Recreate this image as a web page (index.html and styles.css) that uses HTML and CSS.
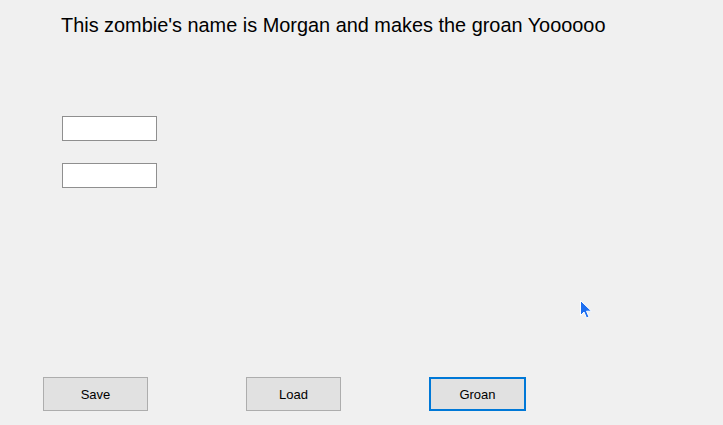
FILE: index.html
```html
<!DOCTYPE html>
<html>
<head>
<meta charset="utf-8">
<link rel="stylesheet" href="styles.css">
</head>
<body>
<div class="form">
  <div class="message">This zombie's name is Morgan and makes the groan Yoooooo</div>
  <div class="fields">
    <input class="textbox" type="text">
    <input class="textbox" type="text">
  </div>
  <div class="buttons">
    <button class="btn btn-save">Save</button>
    <button class="btn btn-load">Load</button>
    <button class="btn btn-groan">Groan</button>
  </div>
  <svg class="cursor" width="14" height="20" viewBox="0 0 14 20">
    <path d="M0.5 0.5 L0.5 15.5 L4 12 L6.5 18 L9 17 L6.5 11.2 L11.5 11.2 Z" fill="#1e6ff0" stroke="#ffffff" stroke-width="1"/>
  </svg>
</div>
</body>
</html>
```
FILE: styles.css
```css
html, body {
  margin: 0;
  padding: 0;
  background: #f0f0f0;
}
.form {
  position: relative;
  width: 723px;
  height: 425px;
  display: flex;
  flex-direction: column;
  font-family: "Liberation Sans", Arial, sans-serif;
  box-sizing: border-box;
}
.message {
  margin: 13px 0 0 61px;
  font-size: 19.9px;
  line-height: 24px;
  color: #000;
}
.fields {
  display: flex;
  flex-direction: column;
  gap: 22px;
  margin: 79px 0 0 62px;
}
.textbox {
  width: 95px;
  height: 25px;
  box-sizing: border-box;
  margin: 0;
  padding: 0;
  border: 1px solid #8f8f8f;
  background: #ffffff;
  outline: none;
}
.buttons {
  margin-top: auto;
  margin-bottom: 14px;
  display: flex;
  padding-left: 43px;
}
.btn {
  height: 34px;
  box-sizing: border-box;
  margin: 0;
  padding: 0;
  background: #e1e1e1;
  border: 1px solid #adadad;
  font-family: "Liberation Sans", Arial, sans-serif;
  font-size: 13px;
  color: #000;
}
.btn-save { width: 105px; }
.btn-load { width: 95px; margin-left: 98px; }
.btn-groan { width: 97px; margin-left: 88px; border: 2px solid #0078d7; }
.cursor {
  position: absolute;
  left: 580px;
  top: 300px;
}
```
